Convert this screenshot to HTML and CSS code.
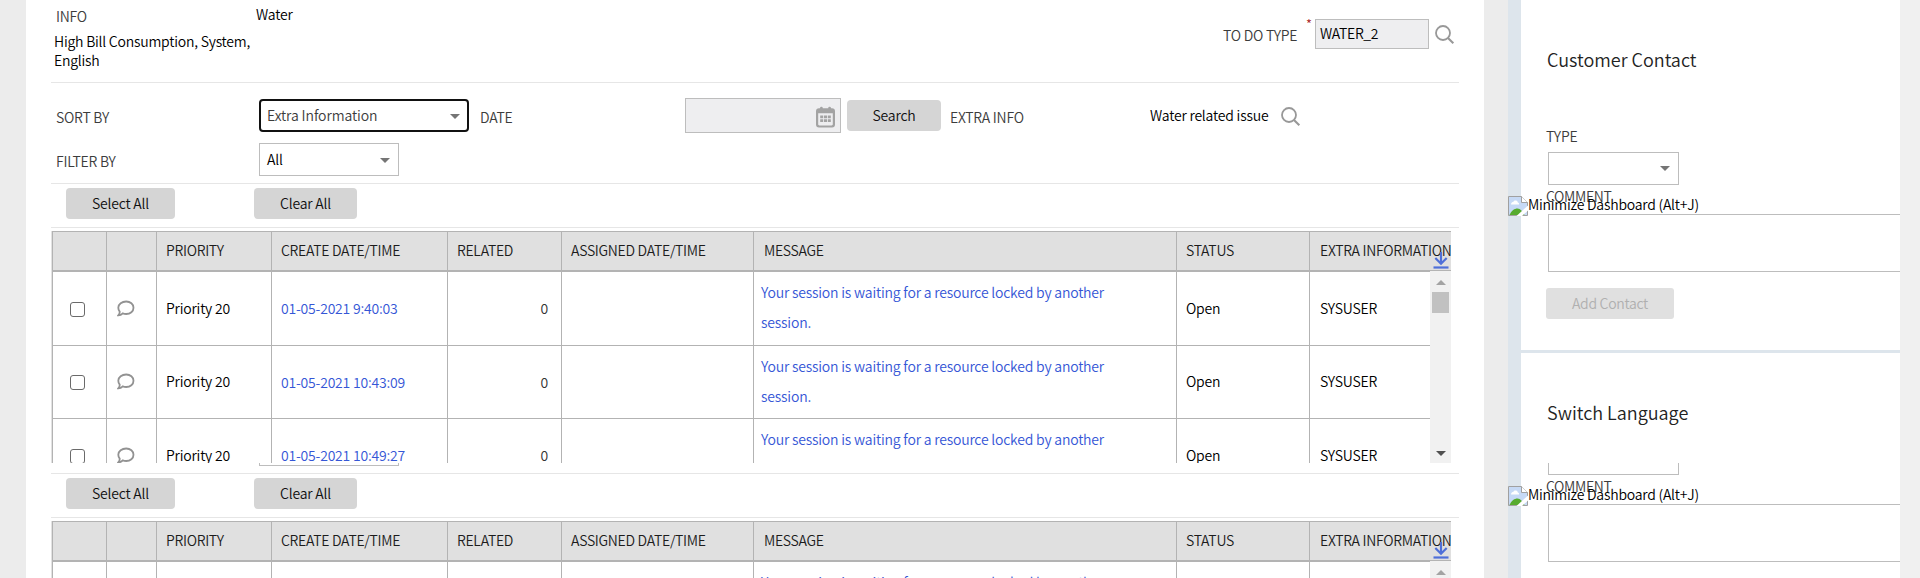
FILE: index.html
```html
<!DOCTYPE html>
<html lang="en">
<head>
<meta charset="utf-8">
<title>To Do List</title>
<link rel="stylesheet" href="styles.css">
</head>
<body>
<svg width="0" height="0" class="defs">
  <symbol id="mag" viewBox="0 0 20 20"><circle cx="8" cy="8" r="7" fill="none" stroke="#989898" stroke-width="1.8"/><path d="M13 13l5.3 5.3" stroke="#989898" stroke-width="2.1"/></symbol>
  <symbol id="chat" viewBox="0 0 18 18"><path d="M9.2 1.5C13.3 1.5 16.5 4.100 16.500 7.700S13.300 14 9.200 14c-1.300 0-2.400-.2-3.400-.6C4.600 14.600 3.200 15.400 1.300 15.400c1-1.100 1.500-2.300 1.400-3.800C1.800 10.500 1.300 9.200 1.300 7.700 1.300 4.100 5 1.500 9.200 1.500z" fill="none" stroke="#929292" stroke-width="1.800"/></symbol>
  <symbol id="cal" viewBox="0 0 19 22"><path fill-rule="evenodd" fill="#a3a3a3" d="M4 2.200a1.400 1.400 0 0 1 2.800 0h5.400a1.400 1.400 0 0 1 2.800 0h1a3 3 0 0 1 3 3v13.300a3 3 0 0 1-3 3H3a3 3 0 0 1-3-3V5.200a3 3 0 0 1 3-3zM2.200 7.300v10.900c0 .7.500 1.200 1.200 1.200h12.200c.7 0 1.200-.5 1.200-1.200V7.300z"/><path fill="#a3a3a3" d="M4.200 9.500h3v2.700h-3zM8 9.500h3v2.700H8zM11.800 9.500h3v2.700h-3zM4.200 13.200h3v2.700h-3zM8 13.200h3v2.700H8zM11.800 13.200h3v2.700h-3z"/></symbol>
  <symbol id="down" viewBox="0 0 16 18"><path d="M8 1v11.500M2.300 7L8 12.700 13.700 7" fill="none" stroke="#4f70d9" stroke-width="2.200"/><path d="M.5 16.500h15" stroke="#4f70d9" stroke-width="2.200"/></symbol>
  <symbol id="broken" viewBox="0 0 20 20"><path d="M.5.500h13l6 6v13H.5z" fill="#c6d9f5" stroke="#a0a0a0"/><path d="M3 8.500c0-2 1.500-2.500 2.300-2.500C6 4 9.500 4 9.800 6.500c1 0 1.500 1 1.200 2z" fill="#fff"/><path d="M1.500 19c2-4.500 5-6.500 8-6.500s5 3 7 6.500z" fill="#56ab2f"/><path d="M13.500.5v6h6" fill="#fff" stroke="#a0a0a0"/><path d="M8.500 20L20 9.500v5L14 20z" fill="#fff"/></symbol>
</svg>
<div class="screen">

  <div class="pane pane-top">
    <main class="work">
      <section class="head">
        <div class="info"><div class="label">INFO</div><div class="info-text">High Bill Consumption, System, English</div></div>
        <div class="kind">Water</div>
        <div class="label todo">TO DO TYPE</div>
        <div class="req">*</div>
        <div class="input todo-input">WATER_2</div>
        <svg class="mag todo-mag"><use href="#mag"/></svg>
      </section>
      <section class="filters">
        <div class="frow first">
          <div class="label fl">SORT BY</div>
          <div class="select focus"><span>Extra Information</span><i></i></div>
          <div class="label date-label">DATE</div>
          <div class="date"><svg width="19" height="22"><use href="#cal"/></svg></div>
          <div class="btn search">Search</div>
          <div class="label extra-label">EXTRA INFO</div>
          <div class="issue">Water related issue</div>
          <svg class="mag"><use href="#mag"/></svg>
        </div>
        <div class="frow">
          <div class="label fl">FILTER BY</div>
          <div class="select all"><span>All</span><i></i></div>
        </div>
      </section>
      <section class="actions"><div class="btn sel">Select All</div><div class="btn clr">Clear All</div></section>
      <div class="table">
        <div class="thead cols"><div></div><div></div><div>PRIORITY</div><div>CREATE DATE/TIME</div><div>RELATED</div><div>ASSIGNED DATE/TIME</div><div class="wide">MESSAGE</div><div>STATUS</div><div class="wide">EXTRA INFORMATION</div></div>
        <svg class="dl"><use href="#down"/></svg>
        <div class="body">
          <div class="rows">
            <div class="row cols r1"><div><b class="cb"></b></div><div><svg class="chat"><use href="#chat"/></svg></div><div>Priority 20</div><div class="link">01-05-2021 9:40:03</div><div class="num">0</div><div></div><div class="link msg">Your session is waiting for a resource locked by another session.</div><div>Open</div><div class="wide">SYSUSER</div></div>
            <div class="row cols r2"><div><b class="cb"></b></div><div><svg class="chat"><use href="#chat"/></svg></div><div>Priority 20</div><div class="link low">01-05-2021 10:43:09</div><div class="num low">0</div><div></div><div class="link msg">Your session is waiting for a resource locked by another session.</div><div>Open</div><div class="wide">SYSUSER</div></div>
            <div class="row cols r3"><div><b class="cb"></b></div><div><svg class="chat"><use href="#chat"/></svg></div><div>Priority 20</div><div class="link">01-05-2021 10:49:27</div><div class="num">0</div><div></div><div class="link msg">Your session is waiting for a resource locked by another</div><div>Open</div><div class="wide">SYSUSER</div></div>
          </div>
          <div class="scroll"><i class="up"></i><i class="thumb"></i><i class="dn"></i></div>
        </div>
      </div>
    </main>
    <aside class="dash">
      <section class="zone contact">
        <h2>Customer Contact</h2>
        <div class="label type">TYPE</div>
        <div class="select type-select"><i></i></div>
        <div class="label comment">COMMENT</div>
        <div class="area"></div>
        <div class="btn add">Add Contact</div>
      </section>
      <section class="zone lang"><h2>Switch Language</h2></section>
      <div class="minimize"><svg width="20" height="20"><use href="#broken"/></svg>Minimize Dashboard (Alt+J)</div>
    </aside>
  </div>

  <div class="pane pane-bottom">
    <main class="work">
      <section class="tail"><div class="stub"></div></section>
      <section class="actions"><div class="btn sel">Select All</div><div class="btn clr">Clear All</div></section>
      <div class="table">
        <div class="thead cols"><div></div><div></div><div>PRIORITY</div><div>CREATE DATE/TIME</div><div>RELATED</div><div>ASSIGNED DATE/TIME</div><div class="wide">MESSAGE</div><div>STATUS</div><div class="wide">EXTRA INFORMATION</div></div>
        <svg class="dl"><use href="#down"/></svg>
        <div class="body">
          <div class="rows">
            <div class="row cols r1"><div></div><div></div><div></div><div></div><div></div><div></div><div class="link msg">Your session is waiting for a resource locked by another</div><div></div><div></div></div>
          </div>
          <div class="scroll"><i class="up"></i></div>
        </div>
      </div>
    </main>
    <aside class="dash">
      <section class="zone">
        <div class="stub type-stub"></div>
        <div class="label comment">COMMENT</div>
        <div class="area"></div>
      </section>
      <div class="minimize"><svg width="20" height="20"><use href="#broken"/></svg>Minimize Dashboard (Alt+J)</div>
    </aside>
  </div>
</div>
</body>
</html>
```
FILE: styles.css
```css
* { box-sizing: border-box; }
body { margin: 0; background: #ececec; color: #000; font: 350 14px/20px "Noto Sans CJK SC", "Open Sans", sans-serif; letter-spacing: -.2px; }
.defs { position: absolute; }
.screen { width: 1920px; height: 578px; overflow: hidden; }
.pane { display: flex; overflow: hidden; padding-left: 26px; }
.pane-top { height: 463px; }
.pane-bottom { height: 115px; }
.label { color: #3c3c3c; white-space: nowrap; letter-spacing: -.25px; }

/* main work area */
.work { width: 1458px; background: #fff; padding-left: 25px; flex: none; }
.head, .filters, .actions, .tail { width: 1408px; border-bottom: 1px solid #e6e6e6; }
.head { height: 83px; display: flex; }
.info { width: 205px; padding-top: 6px; }
.info .label { padding-left: 5px; }
.info-text { padding: 6px 0 0 3px; line-height: 19px; letter-spacing: -.22px; }
.kind { width: 967px; padding-top: 4px; }
.todo { width: 83px; padding-top: 25px; }
.req { width: 9px; padding: 14px 0 0; color: #a22; font-size: 13px; }
.input { background: #eeeef0; border: 1px solid #bdbdbd; }
.todo-input { width: 114px; height: 30px; margin-top: 19px; padding: 3px 0 0 4px; letter-spacing: -.35px; }
.mag { width: 20px; height: 20px; flex: none; }
.todo-mag { margin: 25px 0 0 6px; }

.filters { height: 101px; padding-top: 15px; }
.frow { display: flex; height: 44px; }
.frow.first { height: 45px; }
.fl { width: 208px; padding: 9px 0 0 5px; }
.frow:not(.first) .fl { padding-top: 8px; }
.select { display: flex; justify-content: space-between; align-items: flex-start; background: #fff; border: 1px solid #bdbdbd; height: 33px; }
.select i { width: 0; height: 0; border: 5px solid transparent; border-top-color: #757575; border-bottom: 0; margin: 14px 8px 0 auto; }
.focus { width: 210px; margin-top: 1px; border: 2px solid #111; border-radius: 4px; color: #3c3c3c; padding: 4px 0 0 6px; letter-spacing: -.1px; }
.focus i { margin: 9px 7px 0 auto; }
.all { width: 140px; padding-left: 7px; }
.all span { padding-top: 5px; }
.date-label { width: 215px; padding: 9px 0 0 11px; }
.date { width: 156px; height: 35px; margin-left: 1px; padding: 7px 5px 0 0; display: flex; justify-content: flex-end; background: #eeeef0; border: 1px solid #bdbdbd; }
.btn { height: 31px; line-height: 30px; text-align: center; background: #d5d5d5; border-radius: 4px; flex: none; color: #111; }
.search { width: 94px; margin: 2px 9px 0 6px; }
.extra-label { width: 200px; padding-top: 9px; }
.issue { width: 131px; padding-top: 7px; }
.frow .mag { margin-top: 9px; }

.actions { height: 44px; padding: 4px 0 0 15px; display: flex; gap: 79px; }
.sel { width: 109px; }
.clr { width: 103px; }
.tail { height: 11px; }
.stub { height: 3px; width: 140px; margin-left: 208px; border: 1px solid #bdbdbd; border-top: 0; }

/* to do grid */
.table { width: 1400px; margin-top: 3px; position: relative; border-left: 1px solid #e2e2e2; overflow: hidden; }
.cols { display: grid; grid-template-columns: 54px 50px 115px 176px 114px 192px 423px 133px 142px; }
.cols > div { border-left: 1px solid #b3b3b3; padding-left: 9px; white-space: nowrap; }
.thead { height: 40px; background: #e0e0e0; border: solid #b3b3b3; border-width: 1px 0; color: #1c1c1c; }
.thead > div { padding-top: 8px; letter-spacing: -.3px; }
.cols > .wide { padding-left: 10px; }
.body { display: flex; }
.rows { width: 1378px; border-top: 1px solid #b3b3b3; overflow: hidden; flex: none; }
.row { height: 73px; border-bottom: 1px solid #b3b3b3; }
.row > div { padding-top: 26px; }
.r1 { height: 74px; }
.r2 > div { padding-top: 25px; }
.r2 > .low { padding-top: 26px; }
.row > .msg { padding: 5px 60px 0 7px; line-height: 30px; white-space: normal; }
.link { color: #3556d6; }
.row > .num { text-align: right; padding-right: 13px; color: #333; }
.cb { display: block; width: 15px; height: 15px; margin: 4px 0 0 8px; border: 1px solid #6a6a6a; border-radius: 3px; background: #fff; }
.chat { display: block; width: 18px; height: 18px; margin: 2px 0 0 1px; }
.dl { position: absolute; left: 1381px; top: 20px; width: 16px; height: 18px; }
.scroll { width: 21px; height: 192px; background: #f1f1f1; display: flex; flex-direction: column; align-items: center; }
.up { border: 5px solid transparent; border-bottom-color: #a3a3a3; border-top: 0; margin: 9px 0 7px; }
.thumb { width: 17px; height: 21px; background: #c1c1c1; }
.dn { border: 5px solid transparent; border-top-color: #505050; border-bottom: 0; margin: auto 0 7px; }

/* dashboard */
.dash { width: 412px; margin-left: 24px; padding-left: 13px; background: #dde5ec; position: relative; border-right: 20px solid #f0f0f0; flex: none; }
.zone { background: #fff; padding-left: 25px; overflow: hidden; }
.contact { height: 350px; }
.lang { height: 150px; margin-top: 3px; }
h2 { margin: 0; font-size: 18px; font-weight: 350; line-height: 24px; letter-spacing: 0; color: #222; padding-left: 1px; }
.contact h2, .lang h2 { margin-top: 47px; }
.type { margin-top: 55px; }
.type-select { width: 131px; margin: 6px 0 0 2px; }
.type-select i { margin-top: 13px; }
.comment { margin-top: 1px; letter-spacing: -.35px; }
.area { height: 58px; margin: 8px 0 0 2px; border: 1px solid #bdbdbd; border-right: 0; }
.add { width: 128px; margin-top: 16px; background: #e0e0e0; color: #b0b0b0; border-radius: 3px; letter-spacing: -.3px; }
.minimize { position: absolute; left: 0; top: 196px; display: flex; line-height: 16px; color: #000; white-space: nowrap; letter-spacing: -.23px; }
.type-stub { width: 131px; height: 12px; margin-left: 2px; }
.pane-bottom .zone { height: 115px; }
.pane-bottom .minimize { top: 23px; }
```
